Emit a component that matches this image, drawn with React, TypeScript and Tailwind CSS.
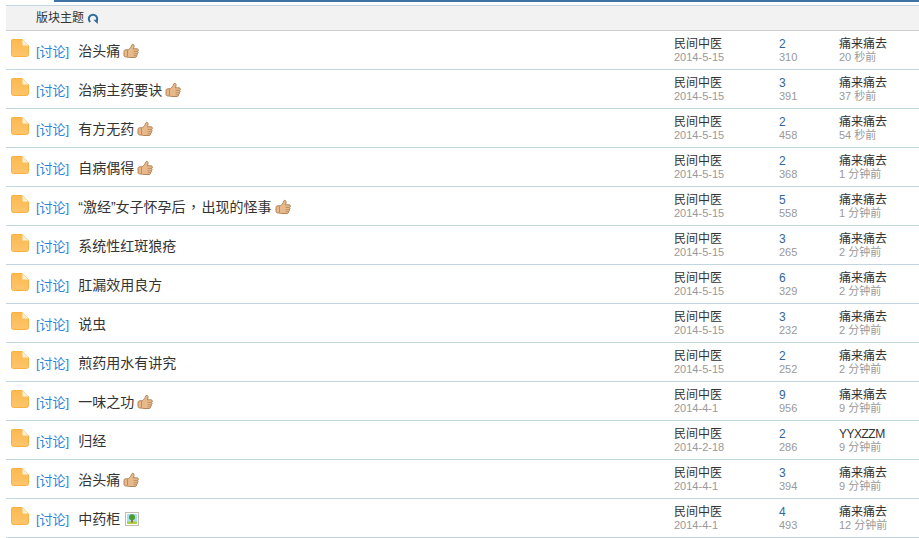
const threads = [
  { title: "治头痛", icon: "thumb", date: "2014-5-15", replies: 2, views: 310, last: "痛来痛去", ago: "20 秒前" },
  { title: "治病主药要诀", icon: "thumb", date: "2014-5-15", replies: 3, views: 391, last: "痛来痛去", ago: "37 秒前" },
  { title: "有方无药", icon: "thumb", date: "2014-5-15", replies: 2, views: 458, last: "痛来痛去", ago: "54 秒前" },
  { title: "自病偶得", icon: "thumb", date: "2014-5-15", replies: 2, views: 368, last: "痛来痛去", ago: "1 分钟前" },
  { title: "“激经”女子怀孕后，出现的怪事", icon: "thumb", date: "2014-5-15", replies: 5, views: 558, last: "痛来痛去", ago: "1 分钟前" },
  { title: "系统性红斑狼疮", icon: "", date: "2014-5-15", replies: 3, views: 265, last: "痛来痛去", ago: "2 分钟前" },
  { title: "肛漏效用良方", icon: "", date: "2014-5-15", replies: 6, views: 329, last: "痛来痛去", ago: "2 分钟前" },
  { title: "说虫", icon: "", date: "2014-5-15", replies: 3, views: 232, last: "痛来痛去", ago: "2 分钟前" },
  { title: "煎药用水有讲究", icon: "", date: "2014-5-15", replies: 2, views: 252, last: "痛来痛去", ago: "2 分钟前" },
  { title: "一味之功", icon: "thumb", date: "2014-4-1", replies: 9, views: 956, last: "痛来痛去", ago: "9 分钟前" },
  { title: "归经", icon: "", date: "2014-2-18", replies: 2, views: 286, last: "YYXZZM", ago: "9 分钟前" },
  { title: "治头痛", icon: "thumb", date: "2014-4-1", replies: 3, views: 394, last: "痛来痛去", ago: "9 分钟前" },
  { title: "中药柜", icon: "image", date: "2014-4-1", replies: 4, views: 493, last: "痛来痛去", ago: "12 分钟前" },
];

function FolderIcon() {
  return (
    <svg width="18" height="18" viewBox="0 0 18 18" className="shrink-0">
      <defs>
        <linearGradient id="folder" x1="0" y1="0" x2="0" y2="1">
          <stop offset="0" stopColor="#fdb94f" />
          <stop offset="1" stopColor="#fdc56c" />
        </linearGradient>
      </defs>
      <path d="M1.5 .5H11.5L17.5 6.5V15.5a2 2 0 0 1-2 2H2.5a2 2 0 0 1-2-2V1.5a1 1 0 0 1 1-1Z" fill="url(#folder)" stroke="#fbb03f" />
      <path d="M11.5 .5L17.5 6.5H12.5a1 1 0 0 1-1-1Z" fill="#fdf0d2" stroke="#f8dca6" strokeWidth=".5" />
    </svg>
  );
}

function ThumbIcon() {
  return (
    <svg width="16" height="16" viewBox="0 0 16 16" className="shrink-0">
      <path
        d="M1 8.5C1 7.4 1.8 6.8 3 6.8H5.2C6.8 5.6 8.2 4 8.6 2.2C8.8 1.2 10.6 .9 11 2.4C11.3 3.6 10.7 4.9 10.2 5.8H14C15.6 5.8 15.8 8 14.6 8.4C15.4 9 15.2 10.4 14.2 10.7C14.7 11.4 14.4 12.5 13.5 12.7C13.8 13.6 13.1 14.5 12.1 14.5H6.8C5.6 14.5 5 14 4 14H3C1.8 14 1 13.4 1 12.3Z"
        fill="#e8b98a"
        stroke="#a97a4c"
        strokeWidth=".9"
      />
      <path d="M4.5 7.2V13.6" stroke="#bd8b5c" strokeWidth="1" />
      <path d="M10.5 8.4H14.4M10.5 10.7H14M10.7 12.7H13.4" stroke="#b5845a" strokeWidth=".8" />
    </svg>
  );
}

function ImageIcon() {
  return (
    <svg width="14" height="14" viewBox="0 0 14 14" className="shrink-0">
      <rect x=".5" y=".5" width="13" height="13" fill="#fff" stroke="#bdbdb0" />
      <rect x="2" y="2" width="10" height="10" fill="#a8dcf5" />
      <rect x="2" y="9.5" width="10" height="2.5" fill="#a8d048" />
      <rect x="6.2" y="7" width="1.6" height="3.5" fill="#9a5a20" />
      <circle cx="7" cy="5.3" r="3" fill="#4a9f2c" />
    </svg>
  );
}

function RefreshIcon() {
  return (
    <svg width="12" height="12" viewBox="0 0 12 12" fill="none">
      <path d="M3.2 10A4.2 4.2 0 1 1 8.8 10" stroke="#2f6d9e" strokeWidth="2" />
      <path d="M6.4 7.8H10.8V12Z" fill="#2f6d9e" />
    </svg>
  );
}

export default function App() {
  return (
    <div className="w-[919px] h-[538px] overflow-hidden bg-white font-['Liberation_Sans','Noto_Sans_CJK_SC',sans-serif]">
      <div className="ml-[54px] h-[2px] bg-[#3f73a8]" />
      <div className="ml-[6px] mt-[3px] h-[26px] flex items-center gap-[3px] pl-[30px] bg-[#f2f2f2] border-t border-b border-t-[#c2d5e3] border-b-[#cdcdcd] text-[12px] text-[#333]">
        <span>版块主题</span>
        <RefreshIcon />
      </div>
      {threads.map((t, i) => (
        <div key={i} className="ml-[6px] h-[39px] flex border-b border-[#c2d5e3]">
          <div className="w-[30px] pl-[5px] pt-[8px]">
            <FolderIcon />
          </div>
          <div className="w-[638px] pt-[2px] flex items-center text-[14px] text-[#333]">
            <span className="mr-[9px] mt-[1px] text-[13px] text-[#2a86da]">[讨论]</span>
            <span>
              {t.title.split("，").map((part, j) => (
                <span key={j}>
                  {j > 0 && <span className="mx-[1px] font-['Noto_Sans_CJK_TC']">，</span>}
                  {part}
                </span>
              ))}
            </span>
            {t.icon === "thumb" && (
              <span className="ml-[3px]">
                <ThumbIcon />
              </span>
            )}
            {t.icon === "image" && (
              <span className="ml-[5px]">
                <ImageIcon />
              </span>
            )}
          </div>
          <div className="w-[105px] pt-[7px] leading-[13px]">
            <div className="text-[12px] text-[#333]">民间中医</div>
            <div className="text-[11px] text-[#999]">{t.date}</div>
          </div>
          <div className="w-[60px] pt-[7px] leading-[13px]">
            <div className="text-[12px] text-[#336699]">{t.replies}</div>
            <div className="text-[11px] text-[#999]">{t.views}</div>
          </div>
          <div className="pt-[7px] leading-[13px]">
            <div className={t.last === "YYXZZM" ? "text-[12px] text-[#333] tracking-[-0.5px]" : "text-[12px] text-[#333]"}>{t.last}</div>
            <div className="text-[11px] text-[#999]">{t.ago}</div>
          </div>
        </div>
      ))}
    </div>
  );
}
